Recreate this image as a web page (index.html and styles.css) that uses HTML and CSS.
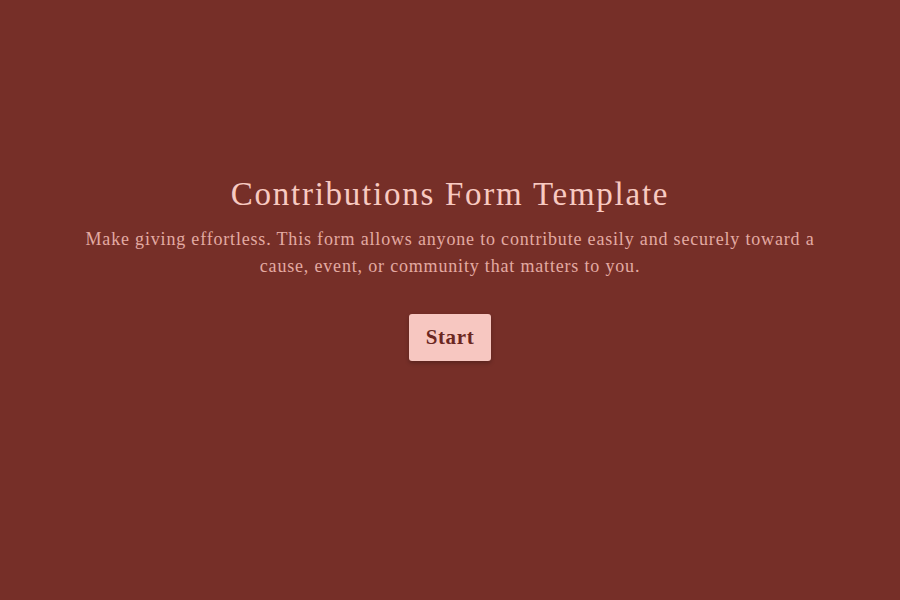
FILE: index.html
```html
<!DOCTYPE html>
<html>
<head>
<meta charset="utf-8">
<link rel="stylesheet" href="styles.css">
</head>
<body>
<main class="page">
  <section class="intro">
    <h1 class="title">Contributions Form Template</h1>
    <p class="desc">Make giving effortless. This form allows anyone to contribute easily and securely toward a cause, event, or community that matters to you.</p>
    <button class="start">Start</button>
  </section>
</main>
</body>
</html>
```
FILE: styles.css
```css
html, body {
  margin: 0;
  padding: 0;
  height: 100%;
  background: #762f28;
}
.page {
  height: 600px;
  display: flex;
  justify-content: center;
  font-family: "Liberation Serif", serif;
}
.intro {
  width: 760px;
  margin-top: 174px;
  display: flex;
  flex-direction: column;
  align-items: center;
  text-align: center;
}
.title {
  margin: 0;
  font-size: 33px;
  letter-spacing: 1.75px;
  font-weight: normal;
  color: #f8cac1;
  line-height: 40px;
}
.desc {
  margin: 12px 0 0;
  font-size: 18px;
  letter-spacing: 0.82px;
  line-height: 27px;
  color: #e3aaa2;
}
.start {
  margin-top: 34px;
  width: 82px;
  height: 47px;
  border: none;
  border-radius: 3px;
  background: #f7c7c1;
  color: #6b2722;
  font-family: "Liberation Serif", serif;
  font-weight: bold;
  font-size: 21px;
  letter-spacing: 0.6px;
  box-shadow: 0 2px 4px rgba(0,0,0,0.25);
}
```
